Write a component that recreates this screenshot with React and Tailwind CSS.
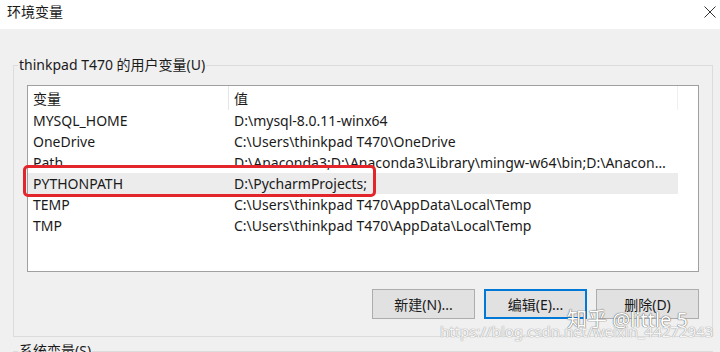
const rows = [
  { name: 'MYSQL_HOME', value: 'D:\\mysql-8.0.11-winx64' },
  { name: 'OneDrive', value: 'C:\\Users\\thinkpad T470\\OneDrive' },
  { name: 'Path', value: 'D:\\Anaconda3;D:\\Anaconda3\\Library\\mingw-w64\\bin;D:\\Anaconda3\\Scripts;D:\\Anaconda3\\Library\\bin' },
  { name: 'PYTHONPATH', value: 'D:\\PycharmProjects;', selected: true },
  { name: 'TEMP', value: 'C:\\Users\\thinkpad T470\\AppData\\Local\\Temp' },
  { name: 'TMP', value: 'C:\\Users\\thinkpad T470\\AppData\\Local\\Temp' },
]

function Button({ children, focused }) {
  return (
    <button
      className={`w-[103px] h-[30px] flex items-center justify-center bg-[#e1e1e1] text-[14px] text-[#1a1a1a] ${
        focused ? 'border-2 border-[#0078d7]' : 'border border-[#adadad]'
      }`}
    >
      {children}
    </button>
  )
}

export default function App() {
  return (
    <div
      className="relative w-[720px] h-[352px] overflow-hidden bg-[#f0f0f0] text-[#1a1a1a]"
      style={{ fontFamily: '"Noto Sans", "Noto Sans CJK SC", sans-serif' }}
    >
      {/* title bar */}
      <div className="h-[29px] bg-white flex items-start justify-between pt-[2px] pl-[7px] pr-[4px]">
        <span className="text-[14px] leading-5">环境变量</span>
        <svg className="mt-[4px]" width="12" height="12" viewBox="0 0 12 12">
          <path d="M0.5 0.5 L11.5 11.5 M11.5 0.5 L0.5 11.5" stroke="#333" strokeWidth="1" fill="none" />
        </svg>
      </div>

      {/* user variables */}
      <fieldset className="mt-[26px] ml-[13px] w-[700px] border border-[#dcdcdc] px-[13px] pt-[10px] pb-[17px]">
        <legend className="ml-[-9px] px-[1px] text-[14px] leading-5">thinkpad T470 的用户变量(U)</legend>

        <div className="h-[187px] border border-[#a0a0a0] bg-white">
          <div className="w-[650px]">
            <div className="flex h-[24px] items-center text-[14px] border-r border-[#f0f0f0]">
              <div className="w-[201px] pl-[5px] border-r border-[#e5e5e5] h-full flex items-center">变量</div>
              <div className="flex-1 pl-[5px]">值</div>
            </div>
            {rows.map((r) => (
              <div
                key={r.name}
                className={`relative flex h-[21px] items-center text-[14px] ${r.selected ? 'bg-[#ececec]' : ''}`}
              >
                <div className="w-[201px] pl-[5px] whitespace-nowrap">{r.name}</div>
                <div className="w-[449px] pl-[5px] pr-[4px] whitespace-nowrap overflow-hidden text-ellipsis">{r.value}</div>
                {r.selected && (
                  <div className="absolute left-[-5px] top-[-8px] w-[353px] h-[32px] border-[3px] border-[#e3262b] rounded-[5px]" />
                )}
              </div>
            ))}
          </div>
        </div>

        <div className="mt-[17px] flex justify-end gap-[9px]">
          <Button>新建(N)...</Button>
          <Button focused>编辑(E)...</Button>
          <Button>删除(D)</Button>
        </div>
      </fieldset>

      {/* system variables (cut off) */}
      <fieldset className="mt-[4px] ml-[13px] w-[700px] border border-[#dcdcdc] px-[13px] pb-[17px]">
        <legend className="ml-[-9px] px-[1px] text-[14px] leading-5">系统变量(S)</legend>
        <div className="h-[100px]" />
      </fieldset>

      {/* watermark */}
      <div className="absolute left-[567px] top-[306px] text-[20px] leading-7 text-white [text-shadow:0_0_1px_#555,0_0_1px_#555] whitespace-nowrap">
        知乎 @little 5
      </div>
      <div className="absolute left-[440px] top-[321px] text-[15px] leading-5 text-white/90 [text-shadow:0_0_1px_#999,0_0_1px_#999] whitespace-nowrap">
        https://blog.csdn.net/weixin_44272943
      </div>
    </div>
  )
}
